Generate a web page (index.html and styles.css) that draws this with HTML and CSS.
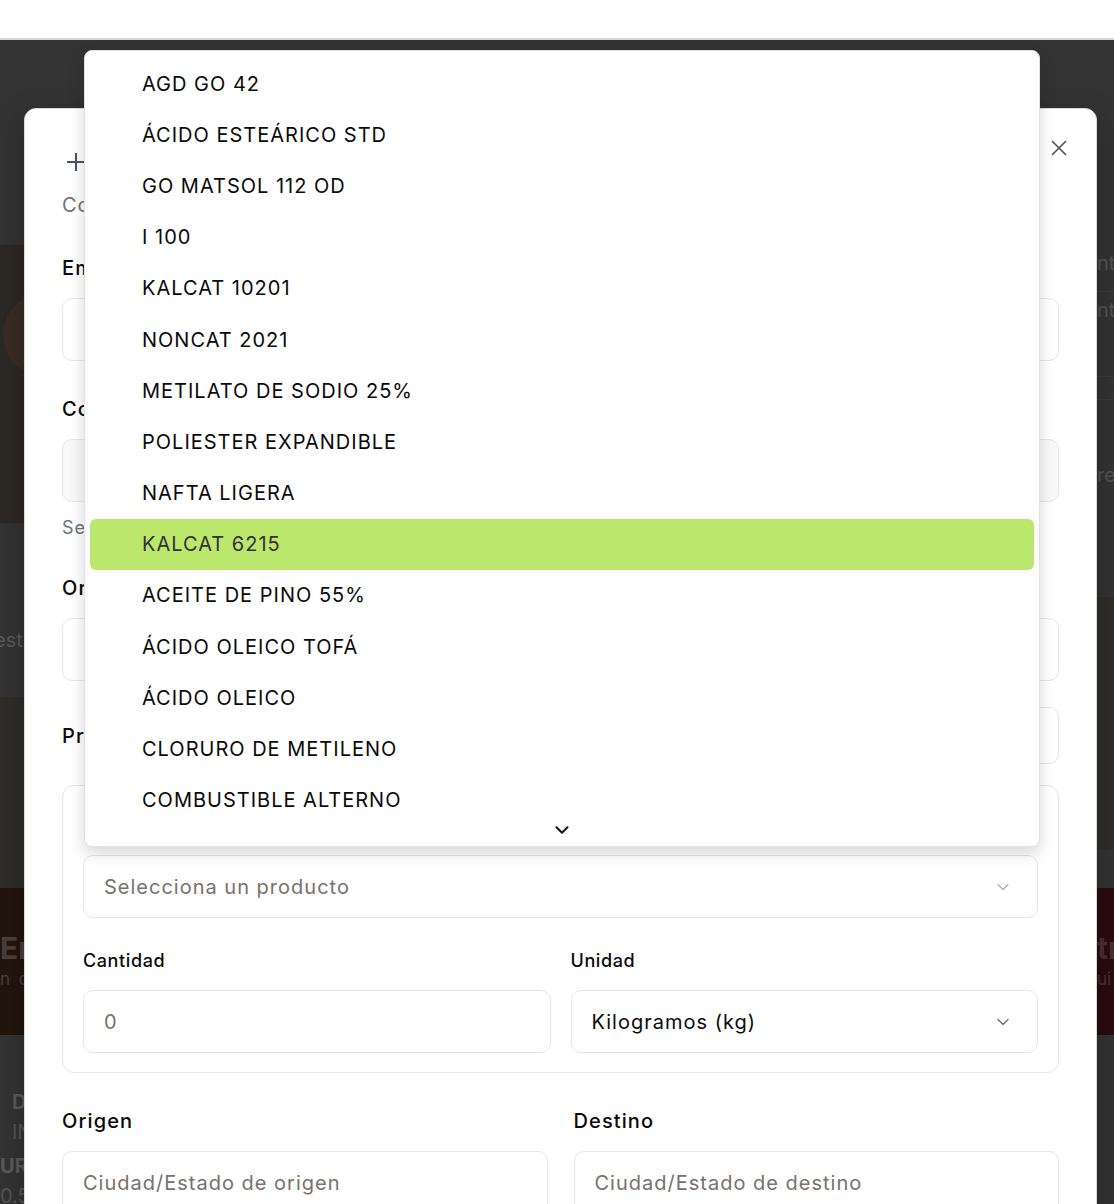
FILE: index.html
```html
<!DOCTYPE html>
<html lang="es">
<head>
<meta charset="utf-8">
<title>Nuevo movimiento</title>
<link rel="stylesheet" href="styles.css">
</head>
<body>
<div class="page">
  <div class="topbar"></div>
  <div class="bg">
    <div class="bg-col bg-left">
      <div class="b b-plain h205"></div>
      <div class="b b-brown h278"><div class="avatar"></div></div>
      <div class="b b-plain h174 est-row"><span class="bgtxt est">est</span></div>
      <div class="b b-dim h191"></div>
      <div class="b b-banner-l h147"><span class="bgtxt big">En</span><span class="bgtxt small">n c</span></div>
      <div class="b b-plain bottom-l">
        <span class="bgtxt bold d">D</span>
        <span class="bgtxt in">IN</span>
        <span class="bgtxt bold ura">URA</span>
        <span class="bgtxt num">0.5</span>
      </div>
    </div>
    <div class="bg-mid"></div>
    <div class="bg-col bg-right">
      <div class="b b-plain h205"></div>
      <div class="b b-plain row-line h47"><span class="bgtxt">nte</span></div>
      <div class="b b-plain row-line h85"><span class="bgtxt">nt</span></div>
      <div class="b b-plain row-line h23"></div>
      <div class="b b-plain h85 re-row"><span class="bgtxt">re</span></div>
      <div class="b b-plain h112"></div>
      <div class="b b-dim h253"></div>
      <div class="b b-plain h38"></div>
      <div class="b b-banner-r h147"><span class="bgtxt big">tr</span><span class="bgtxt small">ui</span></div>
      <div class="b b-plain bottom-r"></div>
    </div>
  </div>
</div>

<div class="modal">
  <button class="close" aria-label="Cerrar">
    <svg width="24" height="24" viewBox="0 0 24 24" fill="none" stroke="currentColor" stroke-width="1.7" stroke-linecap="round"><path d="M18.5 5.5 5.5 18.5M5.5 5.5l13 13"/></svg>
  </button>
  <div class="head">
    <div class="title-row">
      <svg class="plus" width="28" height="28" viewBox="0 0 24 24" fill="none" stroke="currentColor" stroke-width="1.8" stroke-linecap="round"><path d="M12 5v14M5 12h14"/></svg>
      <h2 class="title">Nuevo Movimiento</h2>
    </div>
    <p class="subtitle">Completa la información del movimiento de producto</p>
  </div>

  <div class="form">
    <div class="field">
      <label class="label">Empresa transportista</label>
      <div class="input"></div>
    </div>
    <div class="field gap34">
      <label class="label">Consecutivo</label>
      <div class="input disabled"></div>
      <p class="helper">Se genera automáticamente</p>
    </div>
    <div class="field gap34">
      <label class="label">Orden de compra</label>
      <div class="input"></div>
    </div>
    <div class="prod-head">
      <span class="label">Productos</span>
      <button class="add-btn">+ Agregar producto</button>
    </div>
    <div class="prod-box">
      <div class="sfield">
        <label class="slabel">Producto</label>
        <div class="input select"><span class="ph">Selecciona un producto</span>
          <svg class="chev light" width="20" height="20" viewBox="0 0 24 24" fill="none" stroke="currentColor" stroke-width="1.6" stroke-linecap="round" stroke-linejoin="round"><path d="m6 9 6 6 6-6"/></svg>
        </div>
      </div>
      <div class="sgrid">
        <div class="sfield">
          <label class="slabel">Cantidad</label>
          <div class="input"><span class="ph">0</span></div>
        </div>
        <div class="sfield">
          <label class="slabel">Unidad</label>
          <div class="input select"><span class="val">Kilogramos (kg)</span>
            <svg class="chev" width="20" height="20" viewBox="0 0 24 24" fill="none" stroke="currentColor" stroke-width="1.6" stroke-linecap="round" stroke-linejoin="round"><path d="m6 9 6 6 6-6"/></svg>
          </div>
        </div>
      </div>
    </div>
    <div class="grid2 gap34">
      <div class="field">
        <label class="label">Origen</label>
        <div class="input"><span class="ph">Ciudad/Estado de origen</span></div>
      </div>
      <div class="field">
        <label class="label">Destino</label>
        <div class="input"><span class="ph">Ciudad/Estado de destino</span></div>
      </div>
    </div>
  </div>
</div>

<div class="menu" role="listbox">
  <div class="viewport">
    <div class="item">AGD GO 42</div>
    <div class="item">ÁCIDO ESTEÁRICO STD</div>
    <div class="item">GO MATSOL 112 OD</div>
    <div class="item">I 100</div>
    <div class="item">KALCAT 10201</div>
    <div class="item">NONCAT 2021</div>
    <div class="item">METILATO DE SODIO 25%</div>
    <div class="item">POLIESTER EXPANDIBLE</div>
    <div class="item">NAFTA LIGERA</div>
    <div class="item active">KALCAT 6215</div>
    <div class="item">ACEITE DE PINO 55%</div>
    <div class="item">ÁCIDO OLEICO TOFÁ</div>
    <div class="item">ÁCIDO OLEICO</div>
    <div class="item">CLORURO DE METILENO</div>
    <div class="item">COMBUSTIBLE ALTERNO</div>
    <div class="item">DIÉSEL INDUSTRIAL</div>
  </div>
  <div class="scroll-down">
    <svg width="22" height="22" viewBox="0 0 24 24" fill="none" stroke="currentColor" stroke-width="2.2" stroke-linecap="round" stroke-linejoin="round"><path d="m6 9 6 6 6-6"/></svg>
  </div>
</div>
</body>
</html>
```

FILE: styles.css
```css
* { box-sizing: border-box; }
html, body { margin: 0; padding: 0; }
body {
  width: 1114px;
  height: 1204px;
  overflow: hidden;
  font-family: Inter, "Noto Sans", "Liberation Sans", sans-serif;
  color: #0a0a0a;
  position: relative;
  background: #333333;
}

/* ---------- dimmed background page ---------- */
.page { width: 1114px; height: 1204px; display: flex; flex-direction: column; }
.topbar { height: 40px; background: #fff; border-bottom: 2px solid #d6d6d6; flex: none; }
.bg { flex: 1; display: flex; background: #333333; overflow: hidden; }
.bg-col { display: flex; flex-direction: column; overflow: hidden; }
.bg-left { width: 24px; }
.bg-right { width: 17px; }
.bg-mid { flex: 1; }
.b { flex: none; position: relative; overflow: hidden; }
.b-plain { background: #333333; }
.b-brown { background: #2c2823; }
.b-dim { background: #2f2d2a; }
.b-banner-l { background: #22150d; display: flex; flex-direction: column; padding-top: 42px; }
.b-banner-r { background: #2a0b10; display: flex; flex-direction: column; padding-top: 42px; }
.h205 { height: 205px; }
.h278 { height: 278px; }
.h174 { height: 174px; }
.h191 { height: 191px; }
.h147 { height: 147px; }
.h47 { height: 47px; }
.h85 { height: 85px; }
.h23 { height: 23px; }
.h112 { height: 112px; }
.h253 { height: 253px; }
.h38 { height: 38px; }
.bottom-l, .bottom-r { flex: 1; }
.avatar {
  width: 84px; height: 84px; border-radius: 50%;
  background: #382d23; margin: 48px 0 0 3px;
}
.bgtxt { color: #545454; font-size: 20px; line-height: 24px; white-space: nowrap; display: block; }
.est-row { padding-top: 105px; }
.est { margin-left: -6px; color: #5a5a5a; }
.row-line { border-bottom: 1px solid #3b3b3b; padding-top: 6px; }
.re-row { padding-top: 63px; }
.big { font-size: 30px; font-weight: 700; line-height: 36px; color: #4a3f38; }
.b-banner-r .big { color: #4a2f33; }
.small { font-size: 17px; line-height: 22px; color: #4a3f38; margin-top: 2px; letter-spacing: 2px; }
.b-banner-r .small { color: #4a3236; letter-spacing: 0; }
.bottom-l { padding-top: 52px; }
.bottom-l .bgtxt { font-size: 20px; line-height: 30px; color: #555; }
.bottom-l .bold { font-weight: 700; color: #5a5a5a; }
.bottom-l .d, .bottom-l .in { margin-left: 12px; }
.bottom-l .ura { margin-top: 4px; }

/* ---------- modal ---------- */
.modal {
  position: absolute;
  left: 24px;
  top: 108px;
  width: 1073px;
  height: 1140px;
  background: #fff;
  border-radius: 12px;
  border: 1px solid #d9d9d9;
  padding: 37px 37px;
  box-shadow: 0 10px 30px rgba(0,0,0,0.25);
  letter-spacing: 1px;
}
.close {
  position: absolute;
  right: 25px;
  top: 27px;
  width: 24px; height: 24px;
  padding: 0;
  border: 0; background: transparent; color: #555;
  display: flex; align-items: center; justify-content: center;
}
.title-row { display: flex; align-items: center; gap: 8px; height: 32px; }
.plus { color: #4b5563; flex: none; }
.title { margin: 0; font-size: 24px; line-height: 32px; font-weight: 600; }
.subtitle { margin: 13px 0 0; font-size: 20px; line-height: 28px; color: #737373; }

.form { margin-top: 35px; }
.field { display: flex; flex-direction: column; }
.gap34 { margin-top: 34px; }
.label { font-size: 20px; line-height: 28px; font-weight: 500; margin-bottom: 16px; color: #0a0a0a; letter-spacing: 1.1px; }
.input {
  height: 63px;
  border: 1px solid #e5e5e5;
  border-radius: 10px;
  background: #fff;
  padding: 0 20px;
  display: flex;
  align-items: center;
  font-size: 20px;
}
.input.disabled { background: #f9f9fa; }
.helper { margin: 14px 0 0; font-size: 18px; line-height: 24px; color: #6b7280; }
.ph { color: #78716c; }
.val { color: #0a0a0a; }
.select { justify-content: space-between; padding-right: 24px; }
.chev { color: #6b6b6b; }
.chev.light { color: #b5b0ab; }

.prod-head {
  margin-top: 26px;
  height: 57px;
  display: flex;
  align-items: center;
  justify-content: space-between;
}
.prod-head .label { margin-bottom: 0; }
.add-btn {
  height: 57px; width: 210px;
  border: 1px solid #e5e5e5; border-radius: 10px;
  background: #fff; font: 500 18px Inter, sans-serif; color: #0a0a0a;
}
.prod-box {
  margin-top: 21px;
  border: 1px solid #e5e5e5;
  border-radius: 12px;
  padding: 28px 20px 19px;
}
.sfield { display: flex; flex-direction: column; }
.slabel { font-size: 18px; line-height: 24px; font-weight: 500; margin-bottom: 17px; color: #0a0a0a; letter-spacing: 0.6px; }
.sgrid { margin-top: 31px; display: grid; grid-template-columns: 1fr 1fr; gap: 20px; }
.grid2 { display: grid; grid-template-columns: 1fr 1fr; gap: 26px; }

/* ---------- dropdown menu ---------- */
.menu {
  position: absolute;
  left: 84px;
  top: 50px;
  width: 956px;
  height: 797px;
  background: #fff;
  border: 1px solid #e2e2e2;
  border-radius: 8px;
  padding: 7px 5px 5px;
  box-shadow: 0 6px 16px rgba(0,0,0,0.16);
  display: flex;
  flex-direction: column;
}
.viewport { height: 760px; overflow: hidden; flex: none; }
.item {
  height: 51.2px;
  display: flex;
  align-items: center;
  padding-left: 52px;
  font-size: 20px;
  letter-spacing: 1px;
  color: #0a0a0a;
  border-radius: 6px;
  white-space: nowrap;
}
.item.active { background: #bce76d; color: #333; }
.scroll-down {
  height: 25px;
  display: flex;
  align-items: center;
  justify-content: center;
  color: #111;
}
```
